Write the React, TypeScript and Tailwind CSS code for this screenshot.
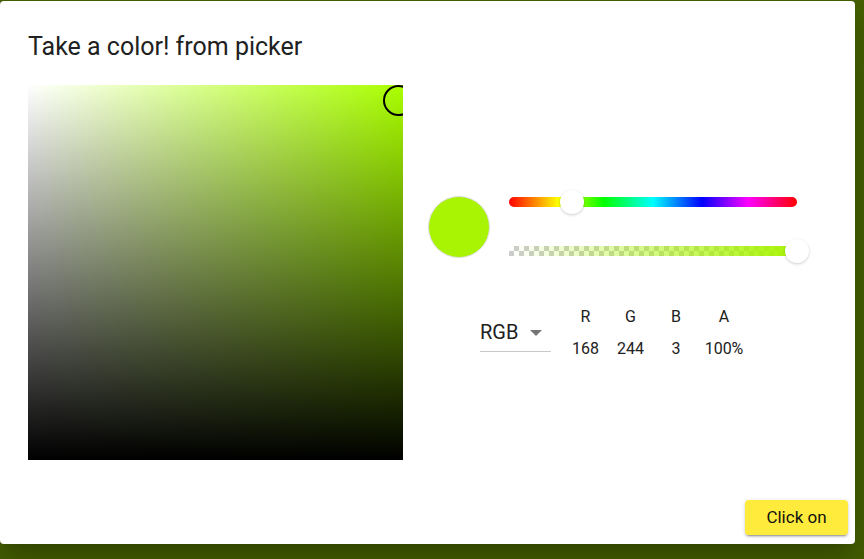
import React from "react";

const hex = "#a8f403";

function HueSlider() {
  return (
    <div className="relative flex h-[24px] w-[288px] items-center">
      <div className="h-[10px] w-full rounded-full bg-[linear-gradient(to_right,#ff0000_0%,#ffff00_17%,#00ff00_33%,#00ffff_50%,#0000ff_67%,#ff00ff_83%,#ff0000_100%)]" />
      <div className="absolute left-[51px] top-0 h-[24px] w-[24px] rounded-full bg-white shadow-[0_1px_3px_rgba(0,0,0,0.2)]" />
    </div>
  );
}

function AlphaSlider() {
  return (
    <div className="relative flex h-[24px] w-[288px] items-center">
      <div className="h-[10px] w-full overflow-hidden rounded-r-full bg-white bg-[repeating-conic-gradient(#cccccc_0%_25%,#ffffff_0%_50%)] bg-[length:10px_10px]">
        <div className="h-full w-full bg-[linear-gradient(to_right,rgba(168,244,3,0)_0%,rgba(168,244,3,1)_100%)]" />
      </div>
      <div className="absolute right-[-12px] top-0 h-[24px] w-[24px] rounded-full bg-white shadow-[0_1px_3px_rgba(0,0,0,0.2)]" />
    </div>
  );
}

const channels = [
  { label: "R", value: "168", w: "w-[45px]" },
  { label: "G", value: "244", w: "w-[45px]" },
  { label: "B", value: "3", w: "w-[46px]" },
  { label: "A", value: "100%", w: "w-[50px]" },
];

export default function App() {
  return (
    <div className="h-[559px] w-[864px] overflow-hidden bg-[#445e00] pt-[1px] font-['Roboto',sans-serif] text-[#212121]">
      <div className="flex h-[543px] w-[855px] flex-col rounded-[4px] bg-white shadow-[0_11px_15px_-7px_rgba(0,0,0,0.2),0_24px_38px_3px_rgba(0,0,0,0.14)]">
        <h2 className="pl-[28px] pt-[30px] text-[25px] leading-[32px] font-normal">
          Take a color! from picker
        </h2>

        <div className="mt-[22px] flex pl-[28px]">
          {/* saturation / value area */}
          <div className="relative h-[375px] w-[375px] overflow-hidden bg-[#aaff00]">
            <div className="absolute inset-0 bg-[linear-gradient(to_right,#ffffff,rgba(255,255,255,0))]" />
            <div className="absolute inset-0 bg-[linear-gradient(to_top,#000000,rgba(0,0,0,0))]" />
            <div className="absolute left-[355px] top-[0px] h-[31px] w-[31px] rounded-full border-2 border-black" />
          </div>

          <div className="ml-[25px] flex flex-col">
            <div className="mt-[105px] flex items-center">
              <div
                className="h-[62px] w-[62px] rounded-full border border-[#dddddd]"
                style={{ backgroundColor: hex }}
              />
              <div className="ml-[19px] flex flex-col gap-[25px]">
                <HueSlider />
                <AlphaSlider />
              </div>
            </div>

            <div className="ml-[52px] mt-[42px] flex items-start">
              <div className="mt-[8px] flex h-[39px] w-[71px] items-center justify-between border-b border-[#c8c8c8] pr-[9px]">
                <span className="text-[20px] leading-[24px]">RGB</span>
                <svg width="12" height="6" viewBox="0 0 12 6" className="mt-[1px]">
                  <path d="M0 0 L12 0 L6 6 Z" fill="#757575" />
                </svg>
              </div>
              <div className="ml-[12px] flex">
                {channels.map((c) => (
                  <div key={c.label} className={`${c.w} flex flex-col items-center`}>
                    <span className="text-[16px] leading-[24px]">{c.label}</span>
                    <span className="mt-[8px] text-[16px] leading-[24px]">{c.value}</span>
                  </div>
                ))}
              </div>
            </div>
          </div>
        </div>

        <div className="flex-1" />
        <div className="flex justify-end pb-[9px] pr-[7px] pt-[8px]">
          <button className="h-[35px] w-[103px] rounded-[4px] bg-[#ffeb3b] text-[17px] text-[#111] shadow-[0_3px_1px_-2px_rgba(0,0,0,0.2),0_2px_2px_0_rgba(0,0,0,0.14),0_1px_5px_0_rgba(0,0,0,0.12)]">
            Click on
          </button>
        </div>
      </div>
    </div>
  );
}
